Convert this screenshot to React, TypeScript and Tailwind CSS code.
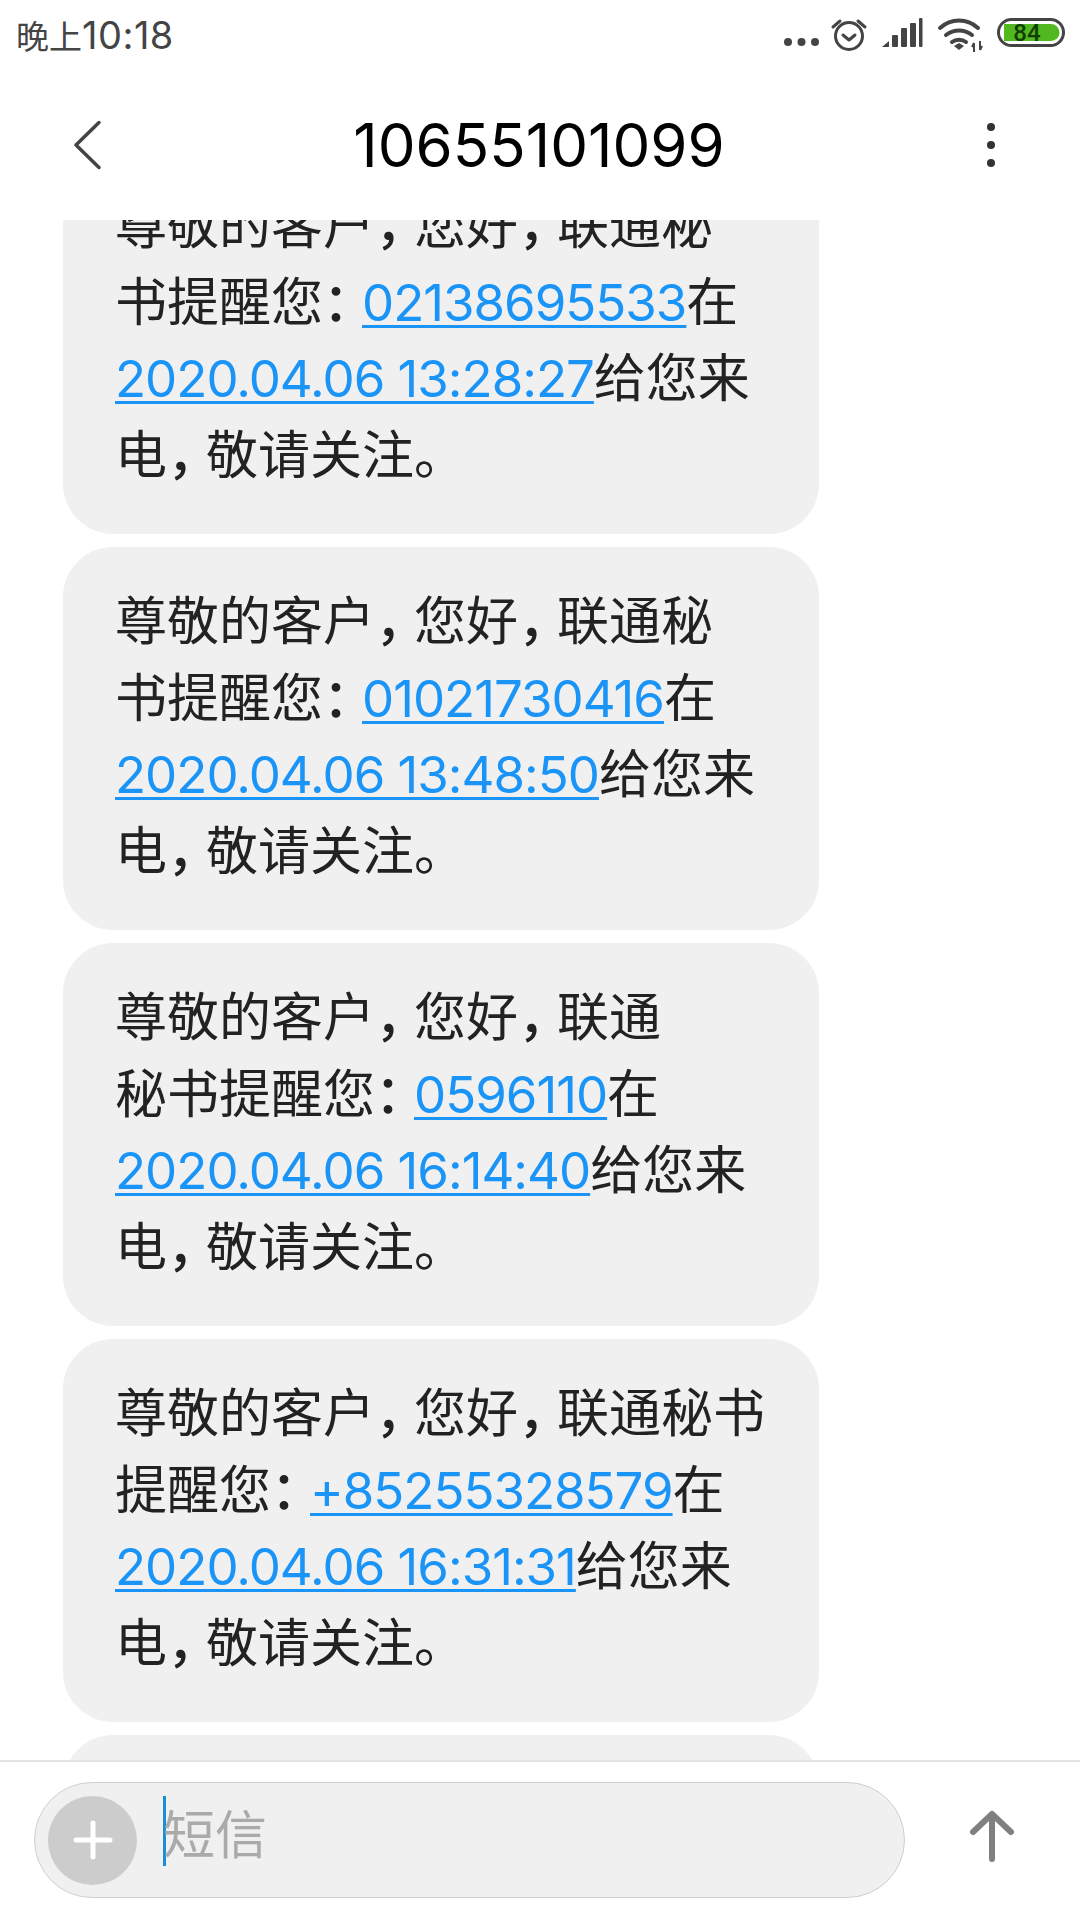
import React from "react";

const messages = [
  { first: "尊敬的客户，您好，联通秘", second: "书提醒您：", phone: "02138695533", time: "2020.04.06 13:28:27" },
  { first: "尊敬的客户，您好，联通秘", second: "书提醒您：", phone: "01021730416", time: "2020.04.06 13:48:50" },
  { first: "尊敬的客户，您好，联通", second: "秘书提醒您：", phone: "0596110", time: "2020.04.06 16:14:40" },
  { first: "尊敬的客户，您好，联通秘书", second: "提醒您：", phone: "+85255328579", time: "2020.04.06 16:31:31" },
];

// commas and colons get a narrower box on the phone
function Cjk({ text }: { text: string }) {
  return (
    <>
      {text.split(/([，：])/).map((part, i) =>
        part === "，" || part === "：" ? (
          <span key={i} className="inline-block w-[39px] font-medium">
            {part}
          </span>
        ) : (
          <span key={i}>{part}</span>
        )
      )}
    </>
  );
}

function LinkText({ children }: { children: React.ReactNode }) {
  return (
    <span className="text-[#1a94f6] text-[51px] tracking-[-1px] underline decoration-[3px] underline-offset-[4px] font-['Inter',sans-serif]">
      {children}
    </span>
  );
}

function Bubble({ first, second, phone, time }: { first: string; second: string; phone: string; time: string }) {
  return (
    <div className="w-[756px] h-[383px] shrink-0 rounded-[50px] bg-[#f0f0f0] pl-[52px] pt-[37px] text-[52px] leading-[76.5px] text-[#222222] whitespace-nowrap">
      <div>
        <Cjk text={first} />
      </div>
      <div>
        <Cjk text={second} />
        <LinkText>{phone}</LinkText>在
      </div>
      <div>
        <LinkText>{time}</LinkText>给您来
      </div>
      <div>
        <Cjk text="电，敬请关注。" />
      </div>
    </div>
  );
}

function StatusIcons() {
  return (
    <svg width="300" height="40" viewBox="0 0 300 40" className="shrink-0">
      <g fill="#444444">
        <circle cx="8" cy="27" r="4" />
        <circle cx="21.5" cy="27" r="4" />
        <circle cx="35" cy="27" r="4" />
      </g>
      <g fill="none" stroke="#444444" strokeWidth="3" strokeLinecap="round" strokeLinejoin="round">
        <circle cx="69" cy="21" r="13.5" />
        <path d="M63 20l6 5 6-5" />
        <path d="M53 12l7-6M85 12l-7-6" />
      </g>
      <g fill="#444444">
        <path d="M102 32l7-6v6z" />
        <rect x="112" y="20" width="6" height="12" rx="1" />
        <rect x="121" y="13" width="6" height="19" rx="1" />
        <rect x="130" y="8" width="6" height="24" rx="1" />
        <rect x="139" y="3" width="3.5" height="29" rx="1" />
      </g>
      <g fill="none" stroke="#444444" strokeWidth="4" strokeLinecap="round">
        <path d="M160 13c11-10 27-10 38 0" />
        <path d="M166 20c8-6 18-6 26 0" />
        <path d="M172 27c4-3 10-3 14 0" />
      </g>
      <path d="M174 31l5-3 5 3-5 4z" fill="#444444" />
      <path d="M194 28v9M192 32l2-4M200 26v9M202 31l-2 4" fill="none" stroke="#444444" strokeWidth="2" />
      <rect x="218.500" y="4.500" width="65" height="26" rx="13" fill="#ffffff" stroke="#444444" strokeWidth="3" />
      <path d="M224 9h47a8.500 8.500 0 0 1 0 17h-47z" fill="#52b81f" />
      <text x="247" y="25.500" textAnchor="middle" fontSize="24" fontFamily="Roboto, sans-serif" fill="#123d05" fontWeight="500">
        84
      </text>
    </svg>
  );
}

export default function App() {
  return (
    <div className="w-[1080px] h-[1920px] flex flex-col overflow-hidden bg-white font-['Inter','Noto_Sans_CJK_SC',sans-serif]">
      {/* Status bar */}
      <div className="h-[70px] shrink-0 flex items-center justify-between pl-[16px]">
        <span className="text-[33px] text-[#444444]">
          晚上<span className="text-[38px] tracking-[0.5px]">10:18</span>
        </span>
        <StatusIcons />
      </div>

      {/* Header */}
      <div className="h-[150px] shrink-0 flex items-center justify-between pl-[72px] pr-[79px]">
        <svg width="30" height="50" viewBox="0 0 30 50" fill="none" stroke="#444444" strokeWidth="3.5" strokeLinecap="round" strokeLinejoin="round">
          <path d="M27 2.500L4 25l23 22.500" />
        </svg>
        <span className="text-[60px] text-black mr-[5px]">10655101099</span>
        <svg width="20" height="50" viewBox="0 0 20 50" fill="#333333">
          <circle cx="10" cy="7" r="4" />
          <circle cx="10" cy="25" r="4" />
          <circle cx="10" cy="43" r="4" />
        </svg>
      </div>

      {/* Messages */}
      <div className="flex-1 min-h-0 overflow-hidden pl-[63px]">
        <div className="flex flex-col gap-[13px] mt-[-69px]">
          {messages.map((m) => (
            <Bubble key={m.time} {...m} />
          ))}
          <div className="w-[756px] h-[383px] shrink-0 rounded-[50px] bg-[#f0f0f0]" />
        </div>
      </div>

      {/* Input bar */}
      <div className="h-[160px] shrink-0 border-t-2 border-[#e4e4e4] flex items-start pl-[34px] pt-[20px]">
        <div className="w-[871px] h-[116px] rounded-[58px] bg-[#f0f0f0] border border-[#cfcfcf] flex items-center pl-[13px]">
          <div className="w-[89px] h-[89px] rounded-full bg-[#cccccc] flex items-center justify-center">
            <svg width="40" height="40" viewBox="0 0 40 40" stroke="#ffffff" strokeWidth="5" strokeLinecap="round">
              <path d="M20 3v34M3 20h34" />
            </svg>
          </div>
          <div className="w-[3px] h-[70px] bg-[#1a8fd6] ml-[26px] mb-[18px]" />
          <span className="text-[52px] text-[#aaaaaa] ml-[-3px] mb-[8px]">短信</span>
        </div>
        <svg width="46" height="52" viewBox="0 0 46 52" fill="none" stroke="#808080" strokeWidth="6" strokeLinecap="round" strokeLinejoin="round" className="ml-[64px] mt-[28px]">
          <path d="M23 49V4M4 22L23 4l19 18" />
        </svg>
      </div>
    </div>
  );
}
